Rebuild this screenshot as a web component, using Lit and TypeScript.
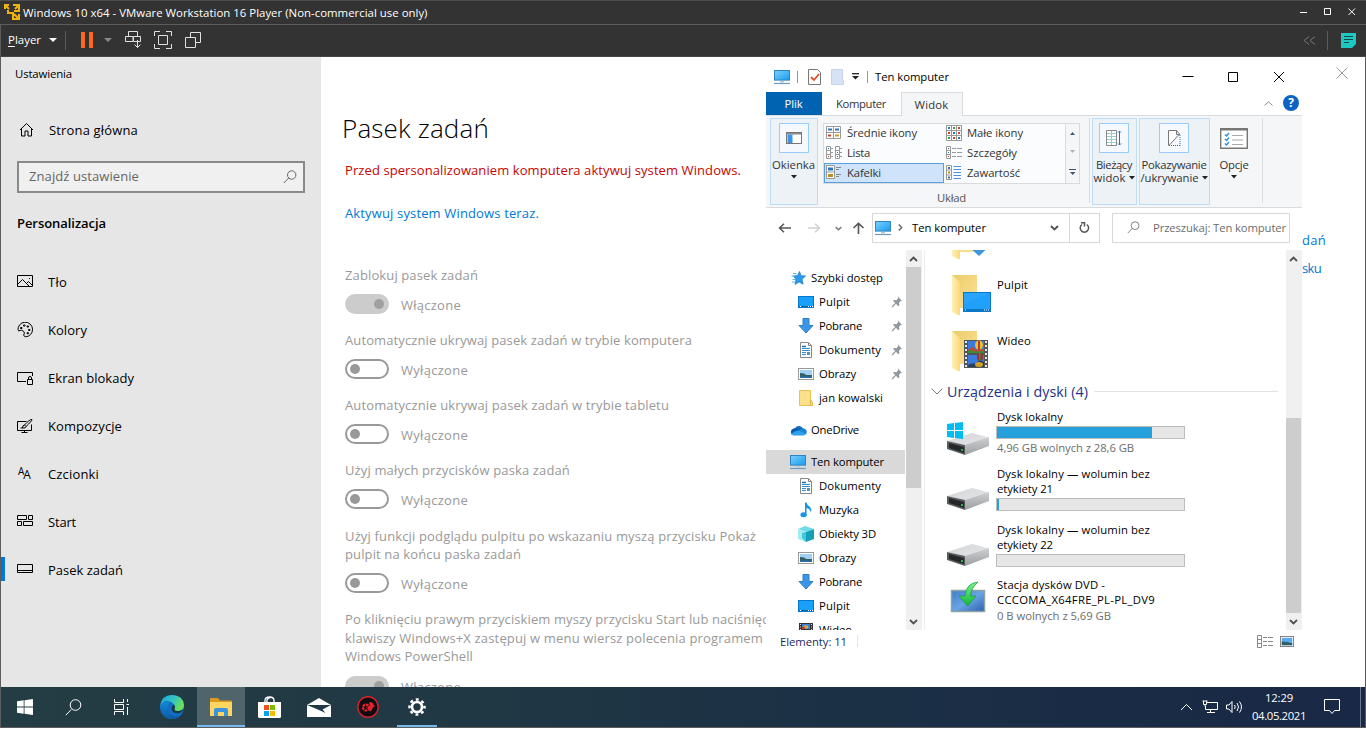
import { LitElement, html, css, nothing, type TemplateResult } from "lit";
import { customElement } from "lit/decorators.js";
import { classMap } from "lit/directives/class-map.js";

/* ---------- icons ---------- */

const monitor = html`<svg width="18" height="16" viewBox="0 0 18 16"><defs><linearGradient id="mg" x1="0" y1="0" x2="1" y2="1"><stop offset="0" stop-color="#7fd0fb"/><stop offset="1" stop-color="#169bf0"/></linearGradient></defs><rect x="1.5" y="1.5" width="15" height="9.6" fill="url(#mg)" stroke="#2f84bd"/><path d="M7 12h4v1.5H7z" fill="#b7cbd8"/><path d="M1 14.5h16" stroke="#6f9dc0" stroke-width="1.2"/></svg>`;
const desktop = html`<svg width="16" height="12" viewBox="0 0 16 12"><rect x=".5" y=".5" width="15" height="11" fill="#18a0fb" stroke="#0a78c8"/><path d="M1 10.500h14" stroke="#0765aa"/><path d="M2 10.500h1M10 10.500h1m1 0h1m1 0h1" stroke="#fff"/></svg>`;
const download = html`<svg width="16" height="16" viewBox="0 0 16 16"><path d="M5 .5h6v7h4L8 15 1 7.500h4z" fill="#3b97e3" stroke="#2a7fcb"/></svg>`;
const docFile = html`<svg width="14" height="16" viewBox="0 0 14 16"><path d="M1.500.5h8l3 3v12h-11z" fill="#fff" stroke="#888"/><path d="M9.500.5v3h3" fill="none" stroke="#888"/><path d="M3 6.500h8M3 8.500h8M3 10.500h4M3 12.500h4" stroke="#2f8fd8"/><path d="M3 4.500h4" stroke="#1670b8" stroke-width="1.500"/><rect x="8" y="10" width="3" height="3" fill="#5b93b0"/></svg>`;
const picture = html`<svg width="16" height="12" viewBox="0 0 16 12"><rect x=".5" y=".5" width="15" height="11" fill="#fff" stroke="#999"/><rect x="2" y="2" width="12" height="8" fill="#9fd0f3"/><path d="M2 5q5 0 6 2 3 0 6 0v3H2z" fill="#315f65"/><path d="M2 8.500h12V10H2z" fill="#2a6fa4"/></svg>`;
const folder = html`<svg width="14" height="16" viewBox="0 0 14 16"><path d="M.5.500h11v11l2 1v3H.5z" fill="#ffe08a" stroke="#e8c257"/><path d="M11.500 10q2 0 1.800 5.500h-2z" fill="#fff0b8" stroke="#e0b545"/></svg>`;
const star = html`<svg width="16" height="14" viewBox="0 0 16 14"><path d="M9.500 .5l1.600 4.200 4.500.2-3.500 3.400 1 4.900-4-2.300L5 13.500l1-5-2.500-3.400 4-.5z" fill="#2b9be8" stroke="#1878c2" stroke-width=".7"/><path d="M3 2.500h3.500M1.500 5h4M2.500 8.500h3.500M2 11h3" stroke="#5eb4ee"/></svg>`;
const cloud = html`<svg width="17" height="12" viewBox="0 0 17 12"><path d="M5 4.200A4.600 4.600 0 0 1 13 4.500L9 8z" fill="#0f6cbd"/><path d="M3.500 4.500Q6 3.500 8 5l7 5.500q-.8.8-2 .8H3.500a3.500 3.500 0 0 1 0-6.800z" fill="#0a5cb0"/><path d="M9 6.500q1.500-2.300 4.300-2.200a3.600 3.600 0 0 1 2.400 6.100z" fill="#1784d8"/><path d="M1.200 10.200Q3 7.500 9 6.500l6.700 3.900q-.9.900-2.200.9H3.500q-1.500 0-2.300-1.100z" fill="#2aa3ee"/></svg>`;
const note = html`<svg width="12" height="16" viewBox="0 0 12 16"><ellipse cx="3.600" cy="12.800" rx="3.200" ry="2.500" fill="#1793e8"/><path d="M5 13V.5h1.500Q7 3 9.500 4.500q3 3 1 6.500.3-4-4-5v7z" fill="#1793e8"/></svg>`;
const cube = html`<svg width="16" height="16" viewBox="0 0 16 16"><path d="M0 3l7-3 9 3-8 3z" fill="#6fdbe8"/><path d="M0 3l8 3v10l-8-3z" fill="#a4ecf4"/><path d="M8 6l8-3v10l-8 3z" fill="#159fb8"/><path d="M8 6v10l-4-4V7z" fill="#42c6da"/></svg>`;
const film = html`<svg width="16" height="16" viewBox="0 0 16 16"><rect x="1" y="1" width="14" height="14" fill="#333"/><rect x="4" y="2" width="8" height="5" fill="#3f83d8"/><path d="M6 3.500h4v3H6z" fill="#e0a63a"/><path d="M4 5h3v2H4z" fill="#c4422b"/><rect x="4" y="8" width="8" height="6" fill="#3268c0"/><path d="M2.500 2v12M13.500 2v12" stroke="#ddd" stroke-dasharray="1 1.500"/></svg>`;
const pin = html`<svg width="12" height="12" viewBox="0 0 12 12"><path d="M6.700.5l4.300 4.300-1.300.2-1.700 1.800.3 2.600-.9.800L2 4.800l1-.8 2.500.2L7 2.300z" fill="#8d979f"/><path d="M4.800 7.200L1 11" stroke="#8d979f" stroke-width="1.200"/></svg>`;

const bigFolder = (over: TemplateResult) => html`<svg width="46" height="42" viewBox="0 0 46 42"><defs><linearGradient id="fb" x1="0" y1="0" x2="1" y2="1"><stop offset="0" stop-color="#eccb68"/><stop offset="1" stop-color="#fbe39a"/></linearGradient><linearGradient id="ff" x1="0" y1="0" x2="1" y2="0"><stop offset="0" stop-color="#fff0b8"/><stop offset="1" stop-color="#fbd978"/></linearGradient></defs><path d="M5 1h25v33H13z" fill="url(#fb)"/><path d="M5 1l8 7v32q0 2-2 1l-6-3z" fill="url(#ff)"/>${over}</svg>`;
const bigDesktop = bigFolder(html`<svg x="16" y="18" width="28" height="20"><rect x=".5" y=".5" width="27" height="19" fill="#2ba5fb" stroke="#0a78c8"/><path d="M1 18h26" stroke="#0b76c4" stroke-width="2"/><path d="M1 12L27 1v16H1z" fill="#159bfa" opacity=".5"/><path d="M2 18h1M21 18h1m1 0h1m1 0h1" stroke="#fff"/></svg>`);
const bigVideo = bigFolder(html`<svg x="17" y="9" width="25" height="30"><path d="M0 1h24v28H0z" fill="#555"/><path d="M2 2v28M22 2v28" stroke="#e8e8e8" stroke-width="2" stroke-dasharray="2 2"/><path d="M4 2h16v12H4zM4 16h16v12H4z" fill="#3a7be0"/><path d="M4 11l4-3 4 3 4-2 4 2v3H4z" fill="#c5482e"/><path d="M4 12l3-1 4 1.500 9-.5v2H4z" fill="#3d8b3d"/><ellipse cx="15" cy="6" rx="4" ry="4.500" fill="#e8c22d"/><path d="M14 2h2v9h-2z" fill="#c43b20"/><ellipse cx="16" cy="18" rx="3" ry="4" fill="#9b3029"/><path d="M15 14h1.500v8H15z" fill="#3b8f46"/><path d="M4 26q4-3 8-1l1-2q3-3 7 0v5H4z" fill="#2c3f66"/><ellipse cx="15" cy="25.500" rx="4" ry="2.500" fill="#d4a326"/></svg>`);
const bigDownload = bigFolder(html`<svg x="16" y="18" width="28" height="22"><path d="M9 0h14v9h5L16 20 4 9h5z" fill="#3b97e3"/></svg>`);

const drive = (win: boolean) => html`<svg width="44" height="34" viewBox="0 0 44 34"><defs><linearGradient id="dt" x1="0" y1="0" x2="1" y2="1"><stop offset="0" stop-color="#d2d4d7"/><stop offset="1" stop-color="#e6e7e9"/></linearGradient><linearGradient id="ds" x1="0" y1="0" x2="0" y2="1"><stop offset="0" stop-color="#cfd0d2"/><stop offset="1" stop-color="#9c9ea1"/></linearGradient></defs><path d="M1 19l25-8 17 4.500-23 8z" fill="url(#dt)"/><path d="M19 23l24-8v9l-24 9z" fill="url(#ds)"/><path d="M1 19l18 4v10L1 27z" fill="#5a5d60"/><path d="M3 21l15 4v6L3 26z" fill="#25282a"/><path d="M15 27l2 .5v1.500l-2-.5z" fill="#2ee24a"/>${win ? html`<svg width="17" height="17"><path d="M1 2l7-1v7H1zM9 1l8-1v8H9zM1 9h7v7l-7-1zM9 9h8v8l-8-1z" fill="#00bcf2"/></svg>` : nothing}</svg>`;
const dvd = html`<svg width="36" height="32" viewBox="0 0 36 32"><defs><linearGradient id="vg" x1="0" y1="0" x2="1" y2="1"><stop offset="0" stop-color="#3d7cc9"/><stop offset=".5" stop-color="#69a4e4"/><stop offset="1" stop-color="#2b5fae"/></linearGradient><linearGradient id="ga" x1="0" y1="0" x2="0" y2="1"><stop offset="0" stop-color="#7af28b"/><stop offset="1" stop-color="#12b53a"/></linearGradient></defs><rect x="1.500" y="9.500" width="33" height="21" fill="url(#vg)" stroke="#8da3a5" stroke-width="1.500"/><path d="M28 1q-12 1-13 14H9l8.500 10L26 15h-5.500Q21 7 28 1z" fill="url(#ga)" stroke="#18983a" stroke-width=".7"/></svg>`;

const line = (w: number, h: number, d: string) =>
  html`<svg class="ln" width=${w} height=${h} viewBox="0 0 ${w} ${h}"><path d=${d}/></svg>`;

const NAV = [
  { label: "Tło", w: 19, icon: line(16, 16, "M.5 1.500h15v11H.5zM1 10l4.500-4.500 7 7M9.500 9.500l2-2 4 4M12 4.500h1") },
  { label: "Kolory", w: 39, icon: line(16, 16, "M1 8.200A7.300 7.300 0 1 1 8.500 14.800Q7 14.800 6.700 13 8.300 11 6.500 9.200 4 7.500 3 8.500 1.500 9.500 1 8.200zM3.500 5.500h1.500v1H3.500zM6.500 3H8v1H6.500zM10 4h1.500v1H10zM11.500 7.500H13v1h-1.500zM10 10.700h1.500v1H10z") },
  { label: "Ekran blokady", w: 86, icon: line(16, 16, "M9 11.500H.5v-9h15v3.500M10.500 9.500h5v5h-5zM11.500 9.500V8q0-1.500 1.500-1.500T14.500 8v1.500") },
  { label: "Kompozycje", w: 74, icon: line(16, 16, "M9.500 3.500h-9v9h14v-6M7.500 12.500v2M4.500 14.500h6M15 1.500Q13 1 7.500 7l1.500 1.500Q15 3 15 1.500zM7.500 7q-2 0-2 3H3.500M9 8.500q0 2-3.500 1.500") },
  { label: "Czcionki", w: 51, icon: html`<span class="aa"><span class="a1">A</span><span class="a2">A</span></span>` },
  { label: "Start", w: 28, icon: line(16, 16, "M.5 1.500h9v4h-9zM11.500 1.500h4v4h-4zM.5 7.500h4v4h-4zM6.500 7.500h9v4h-9z") },
  { label: "Pasek zadań", w: 75, icon: line(16, 16, "M.5 2.500h15v8H.5zM.5 8.500h15"), on: true },
];

const OPTIONS: { lines: [string, number][]; on?: boolean }[] = [
  { lines: [["Zablokuj pasek zadań", 133]], on: true },
  { lines: [["Automatycznie ukrywaj pasek zadań w trybie komputera", 347]] },
  { lines: [["Automatycznie ukrywaj pasek zadań w trybie tabletu", 324]] },
  { lines: [["Użyj małych przycisków paska zadań", 225]] },
  { lines: [["Użyj funkcji podglądu pulpitu po wskazaniu myszą przycisku Pokaż", 411], ["pulpit na końcu paska zadań", 176]] },
  { lines: [["Po kliknięciu prawym przyciskiem myszy przycisku Start lub naciśnięciu", 435], ["klawiszy Windows+X zastępuj w menu wiersz polecenia programem", 418], ["Windows PowerShell", 128]], on: true },
];

const TREE: { label: string; w: number; icon: TemplateResult; root?: boolean; pin?: boolean; gap?: boolean; on?: boolean }[] = [
  { label: "Szybki dostęp", w: 72, icon: star, root: true },
  { label: "Pulpit", w: 31, icon: desktop, pin: true },
  { label: "Pobrane", w: 43, icon: download, pin: true },
  { label: "Dokumenty", w: 62, icon: docFile, pin: true },
  { label: "Obrazy", w: 37, icon: picture, pin: true },
  { label: "jan kowalski", w: 64, icon: folder },
  { label: "OneDrive", w: 48, icon: cloud, root: true, gap: true },
  { label: "Ten komputer", w: 73, icon: monitor, root: true, gap: true, on: true },
  { label: "Dokumenty", w: 62, icon: docFile },
  { label: "Muzyka", w: 40, icon: note },
  { label: "Obiekty 3D", w: 57, icon: cube },
  { label: "Obrazy", w: 37, icon: picture },
  { label: "Pobrane", w: 43, icon: download },
  { label: "Pulpit", w: 31, icon: desktop },
  { label: "Wideo", w: 33, icon: film },
];

const VIEWS: { label: string; w: number; icon: TemplateResult; on?: boolean }[] = [
  { label: "Średnie ikony", w: 70, icon: html`<svg width="16" height="14" viewBox="0 0 16 14"><path d="M.5.5h14v12H.5zM7.500.5v12M.5 6.500h14" fill="#fff" stroke="#999"/><path d="M2 3.500h4M9 3.500h4" stroke="#2e77b8" stroke-width="2"/><path d="M2 9.500h3" stroke="#c4422b" stroke-width="2"/><path d="M9 9.500h4" stroke="#c99c1e" stroke-width="2"/></svg>` },
  { label: "Małe ikony", w: 56, icon: html`<svg width="16" height="16" viewBox="0 0 16 16"><path d="M.5.5h15v15H.5zM5.500.5v15M10.500.5v15M.5 5.500h15M.5 10.500h15" fill="#fff" stroke="#999"/><path d="M2 3h2M7 8h2M12 13h2" stroke="#2e77b8" stroke-width="2"/><path d="M7 3h2M2 13h2" stroke="#3c9a45" stroke-width="2"/><path d="M12 3h2M2 8h2M7 13h2M12 8h2" stroke="#c4422b" stroke-width="2"/></svg>` },
  { label: "Lista", w: 23, icon: html`<svg width="16" height="14" viewBox="0 0 16 14"><path d="M.5.5h4v12h-4zM.5 4.500h4M.5 8.500h4M9.500.5h4v12h-4zM9.500 4.500h4M9.500 8.500h4M5 2.500h2M5 6.500h2M5 10.500h2M14 2.500h2M14 6.500h2M14 10.500h2" fill="none" stroke="#999"/><path d="M2 2.500h1M11 6.500h1" stroke="#2e77b8"/><path d="M2 10.500h1M11 10.500h1" stroke="#c4422b"/></svg>` },
  { label: "Szczegóły", w: 50, icon: html`<svg width="16" height="14" viewBox="0 0 16 14"><path d="M.5.5h4v12h-4zM.5 4.500h4M.5 8.500h4M6 2.500h4M6 6.500h4M6 10.500h4M11 2.500h5M11 6.500h5M11 10.500h5" fill="none" stroke="#999"/><path d="M2 2.500h1M2 6.500h1" stroke="#2e77b8"/><path d="M2 10.500h1" stroke="#c4422b"/></svg>` },
  { label: "Kafelki", w: 34, on: true, icon: html`<svg width="16" height="15" viewBox="0 0 16 15"><path d="M.5.5h8v13h-8zM.5 7h8" fill="#fff" stroke="#999"/><path d="M2 4h5" stroke="#2e77b8" stroke-width="3"/><path d="M2 10.500h5" stroke="#b78f2d" stroke-width="3"/><path d="M10 2.500h5M10 4.500h3M10 9.500h5M10 11.500h3" stroke="#888"/></svg>` },
  { label: "Zawartość", w: 53, icon: html`<svg width="16" height="15" viewBox="0 0 16 15"><path d="M.5.5h5v14h-5zM.5 5h5M.5 10h5" fill="#fff" stroke="#999"/><path d="M2 3h2M2 12.500h2" stroke="#2e77b8" stroke-width="2"/><path d="M2 7.500h2" stroke="#b78f2d" stroke-width="2"/><path d="M7.500 1.500h7.500M7.500 4.500h7.500M7.500 7.500h7.500M7.500 10.500h7.500M7.500 13.500h7.500" stroke="#4a90e0"/></svg>` },
];

const t = (text: string, w: number, cls = "") => html`<span class="t ${cls}" data-w=${w}>${text}</span>`;
const caret = html`<svg class="caret" width="6" height="4" viewBox="0 0 6 4"><path d="M0 0h6L3 3.500z"/></svg>`;
const chevron = (up: boolean) => html`<svg width="9" height="6" viewBox="0 0 9 6"><path d=${up ? "M1 5l3.500-3.500L8 5" : "M1 1l3.500 3.500L8 1"} fill="none" stroke="#505050" stroke-width="1.800"/></svg>`;

/* Spacing between the individual glyphs of the bars. */
const gaps = css`
  .wfill { margin-left: 8px; }
  .vs1 { margin-left: 8px; }
  .g1 { margin-left: 14px; }
  .g2 { margin-left: 10px; }
  .g3 { margin-left: 13px; }
  .g4 { margin-left: 11px; }
  .g5 { margin-left: 13px; }
  .g6 { margin-left: auto; }
  .g7 { margin: 0 13px 0 10px; }
  .e1 { margin-left: 6px; }
  .e2 { margin-left: 10px; }
  .e3 { margin-left: 10px; }
  .e4 { margin-left: 8px; }
  .e5 { margin: 0 7px 0 8px; }
  .e7 { margin-left: auto; margin-right: 17px; gap: 33px; }
  .e7 svg:nth-child(2) { margin-right: 1px; }
  .e8 { margin: 9px 0 0 auto; }
  .b1 { width: 48px; }
  .b2 { width: 45px; margin-left: 2px; }
  .b3 { width: 71px; margin-left: 2px; }
  .b4 { width: 49px; margin-right: 3px; }
  .a3 { margin-left: 17px; }
  .a4 { margin-left: 14px; }
  .a5 { margin: 0 7px 0 10px; }
  .path { width: 198px; padding-left: 1px; }
  .a6 { margin: 0 9px 0 6px; }
  .a7 { margin-left: auto; margin-right: 10px; }
  .ref { width: 31px; margin-left: -1px; justify-content: center; }
  .srch { width: 178px; margin-left: 12px; padding-left: 14px; gap: 13px; color: #6d6d6d; }
  .files .t { margin-left: 1px; }
  .head .t { margin-left: 0; }
  .f1 { padding-top: 4px; line-height: 21px; }
  .d1 .tile { padding-top: 7px; height: 64px; }
  .d1 .pics { margin: 13px 1px 0 -1px; }
  .d2 .pics { margin: 11px 1px 0 -1px; }
  .tx .bar { margin-top: 2px; }
  .d4 .pics { padding-left: 3px; padding-top: 4px; }
  .d4 .tile { margin-top: -1px; }
  .s1 { margin-left: 10px; background: #e6e6e6; height: 12px; }
  .s2 { margin-left: auto; margin-right: 7px; }
  .edge { width: 52px; padding-left: 2px; }
  .tray { margin-left: auto; }
  .k1 { margin-left: 9px; }
  .k2 { margin-left: 8px; }
  .clock { margin-left: 8px; }
  .k3 { margin-left: 17px; }
  .k4 { width: 1px; height: 40px; background: #6d7890; margin: 0 4px 0 20px; }
`;

@customElement("app-root")
export class AppRoot extends LitElement {
  static styles = [css`
    :host { display: block; width: 1366px; height: 729px; overflow: hidden; background: #fff; font-family: "Open Sans", "Noto Sans", sans-serif; font-size: 13px; color: #000; }
    * { box-sizing: border-box; }
    svg { display: block; flex: none; }
    .t { white-space: nowrap; display: block; flex: none; }
    .row { display: flex; align-items: center; }
    .ln { fill: none; stroke: #000; }
    .screen { height: 728px; display: flex; flex-direction: column; }

    .vmtitle { height: 25px; background: #333; border-top: 1px solid #4d4d4d; border-bottom: 1px solid #5c5c5c; padding: 0 10px 0 4px; color: #fff; font-size: 11.4px; flex: none; }
    .vmtitle .t { margin-left: 2px; }
    .wbtns { margin-left: auto; gap: 16px; padding-bottom: 1px; }
    .vmbar { height: 32px; background: #333; border-left: 1px solid #5c5c5c; border-bottom: 1px solid #444; padding: 0 10px 1px 7px; color: #fff; font-size: 11.4px; flex: none; }
    .vmbar u { text-underline-offset: 2px; }
    .vmbar > .t { padding-bottom: 1px; }
    .vsep { width: 1px; height: 19px; background: #5c5c5c; flex: none; }

    .guest { height: 671px; border-left: 1px solid #5c5c5c; border-right: 1px solid #5c5c5c; border-bottom: 1px solid #5c5c5c; display: flex; flex-direction: column; position: relative; }
    .settings { height: 630px; display: flex; overflow: hidden; }
    .side { width: 320px; background: #e6e6e6; flex: none; }
    .apptitle { height: 34px; padding: 0 0 2px 14px; font-size: 11.4px; }
    .home { height: 40px; margin-top: 19px; padding-left: 18px; gap: 15px; }
    .find { height: 32px; width: 288px; margin: 11px 0 0 16px; border: 2px solid #8a8a8a; background: #f0f0f0; color: #666; padding: 0 6px 2px 10px; justify-content: space-between; }
    .find svg { margin-top: 2px; }
    .group { margin: 20px 0 25px 16px; height: 20px; font-weight: 600; }
    .item { height: 48px; padding: 0 0 0 16px; gap: 15px; position: relative; }
    .item.on::before { content: ""; position: absolute; left: 0; top: 11px; width: 4px; height: 24px; background: #0078d7; }
    .aa { width: 16px; height: 16px; display: flex; }
    .a1 { font: 10px/11px "Open Sans", sans-serif; padding-left: 1px; }
    .a2 { font: 500 12px/18px "Open Sans", sans-serif; margin-left: -1px; }

    .main { flex: 1; padding-left: 24px; display: flex; flex-direction: column; }
    h1 { margin: 50px 0 0 -3px; height: 42px; line-height: 42px; font-size: 26px; font-weight: 300; }
    .warn { color: #c50500; height: 20px; line-height: 20px; margin-top: 11px; }
    .link { color: #0078d7; line-height: 20px; height: 20px; }
    .act { margin-top: 23px; margin-bottom: 43px; }
    .opt { color: #999; margin-bottom: 17px; }
    .lines { line-height: 18.500px; margin-bottom: 10px; }
    .n1 { height: 18px; } .n2 { height: 37px; line-height: 18px; padding-top: 1px; } .n3 { height: 56px; }
    .sw { height: 20px; gap: 12px; }
    .sw .t { padding-top: 2px; }
    .knob { width: 44px; height: 20px; border: 2px solid #999; border-radius: 10px; padding: 0 3px; display: flex; align-items: center; flex: none; }
    .knob::before { content: ""; width: 10px; height: 10px; border-radius: 5px; background: #999; }
    .knob.on { background: #ccc; border-color: #ccc; justify-content: flex-end; }
    .knob.on::before { background: #a0a0a0; }
    .rail { width: 63px; flex: none; display: flex; flex-direction: column; }
    .rail svg { margin: 10px 0 147px 34px; }
    .rail .t { height: 28px; line-height: 28px; }

    .explorer { position: absolute; left: 765px; top: 0; width: 536px; height: 598px; background: #fff; font-size: 11.300px; display: flex; flex-direction: column; }
    .etitle { height: 35px; padding: 4px 0 0 7px; flex: none; }
    .etitle .vsep { height: 12px; background: #999; }
    .tabs { height: 23px; display: flex; flex: none; position: relative; }
    .tab { height: 24px; display: flex; align-items: center; justify-content: center; color: #333; flex: none; padding: 0 1px 1px 0; }
    .file { width: 56px; background: #0063b1; color: #fff; height: 23px; }
    .comp { width: 79px; }
    .view { width: 62px; background: #f5f6f7; border: 1px solid #dadbdc; border-bottom: 0; }
    .help { width: 16px; height: 16px; border-radius: 8px; background: #0b63c4; color: #fff; font: 700 12px/16px "Open Sans", sans-serif; text-align: center; margin: 3px 3px 0 10px; }
    .ribbon { height: 93px; background: #f5f6f7; border-top: 1px solid #dadbdc; border-bottom: 1px solid #dadbdc; display: flex; flex: none; padding: 2px 0 0 4px; color: #333; }
    .tabs .view { z-index: 1; }
    .big { height: 87px; display: flex; flex-direction: column; align-items: center; border: 1px solid #bcdcf8; background: #edf2f7; padding: 4px 1px 0 0; flex: none; }
    .big .ic { width: 30px; height: 30px; border: 1px solid #99ccff; background: #f5f9fd; display: flex; align-items: center; justify-content: center; margin-bottom: 5px; }
    .big.plain { border-color: transparent; background: none; }
    .big.plain .ic { border: 0; background: none; }
    .big .row, .big > .t { height: 13px; line-height: 13px; gap: 3px; }
    .big > svg { margin-top: 4px; }
    .caret { fill: #222; }
    .gal { margin-left: 5px; width: 266px; }
    .galbox { margin-top: 5px; height: 61px; border: 1px solid #dadbdc; background: #fbfcfd; display: flex; width: 257px; }
    .cells { width: 241px; display: grid; grid-template-columns: 120px 1fr; grid-template-rows: repeat(3, 20px); margin-top: -1px; }
    .cell { display: flex; align-items: center; gap: 5px; padding: 0 0 1px 2px; }
    .cell svg { width: 16px; }
    .cell.on { background: #cfe3fa; border: 1px solid #5a9fe0; padding-left: 1px; }
    .galbar { width: 14px; border-left: 1px solid #dadbdc; background: #f5f6f7; display: flex; flex-direction: column; align-items: center; justify-content: space-around; }
    .cap { padding: 7px 9px 0 0; display: flex; justify-content: center; color: #555; line-height: 14px; }
    .rsep { width: 1px; height: 85px; background: #dcdddf; }
    .addr { height: 42px; padding: 5px 12px 7px 12px; flex: none; display: flex; align-items: center; }
    .box { height: 30px; border: 1px solid #d9d9d9; display: flex; align-items: center; flex: none; padding-bottom: 1px; }
    .body { height: 380px; display: flex; flex: none; }
    .tree { width: 140px; overflow: hidden; padding-top: 16px; }
    .node { height: 24px; width: 139px; padding: 0 0 2px 31px; }
    .node .ni { width: 18px; display: flex; justify-content: center; margin-right: 4px; padding-top: 1px; }
    .node.root { padding-left: 23px; }
    .node.gap { margin-top: 8px; }
    .node.on { background: #d9d9d9; }
    .node .pn { margin-left: auto; margin-right: 2px; padding-top: 1px; }
    .sb { width: 16px; height: 380px; background: #f0f0f0; display: flex; flex-direction: column; align-items: center; flex: none; justify-content: space-between; }
    .sb svg { margin: 6px 1px 5px 0; }
    .thumb { width: 15px; background: #cdcdcd; }
    .grow { flex: 1; display: flex; flex-direction: column; width: 16px; }
    .t1 { height: 221px; } .t2 { height: 195px; margin-top: auto; }
    .files { width: 362px; margin-left: 2px; border-left: 1px solid #eee; overflow: hidden; padding-left: 22px; flex: none; }
    .files .tile { height: 56px; display: flex; }
    .pics { width: 49px; flex: none; }
    .clip { height: 20px; overflow: hidden; display: flex; align-items: flex-end; }
    .clip svg { margin-bottom: 10px; }
    .head { height: 20px; margin-left: -16px; padding-bottom: 2px; color: #1e3287; font-size: 14.300px; gap: 4px; }
    .head i { height: 1px; width: 184px; background: #e2e2e2; margin: 1px 0 0 2px; }
    .bar { width: 189px; height: 13px; border: 1px solid #bcbcbc; background: #e6e6e6; }
    .fill { height: 11px; background: #26a0da; }
    .tx { line-height: 15px; }
    .sub { color: #6d6d6d; line-height: 16px; margin-top: 1px; }
    .status { height: 24px; padding: 0 8px 2px 14px; color: #1e2a66; flex: none; }

    .task { height: 40px; background: linear-gradient(90deg, #243c43 0%, #203844 35%, #1b2f45 65%, #192846 100%); display: flex; flex: none; color: #fff; }
    .app { width: 49px; height: 40px; display: flex; align-items: center; justify-content: center; border-bottom: 2px solid transparent; padding-top: 2px; flex: none; }
    .app.nar { width: 48px; }
    .app.hot { background: #50646c; border-color: #76b9ed; width: 48px; }
    .app.run { border-color: #76b9ed; width: 40px; margin-left: 5px; }
    .white .ln { stroke: #fff; fill: none; }
    .clock { font-size: 11.300px; line-height: 18px; display: flex; flex-direction: column; align-items: center; width: 56px; }
  `, gaps];

  firstUpdated() {
    this.renderRoot.querySelectorAll<HTMLElement>(".t[data-w]").forEach((el) => {
      const range = document.createRange();
      range.selectNodeContents(el);
      const natural = range.getBoundingClientRect().width;
      const n = (el.textContent ?? "").length;
      if (natural && n > 1) {
        el.style.letterSpacing = `${((Number(el.dataset.w) - natural) / n).toFixed(3)}px`;
      }
    });
  }

  private vm() {
    return html`
      <div class="vmtitle row">
        <svg width="17" height="17" viewBox="0 0 17 17" fill="none" stroke="#efb310" stroke-width="2"><path d="M5 1H1v4M1 1l4 4M9 1h6v6h-5M15 1l-4 4M4 6v3h5v6h6v-5M10 10l5 5"/></svg>
        ${t("Windows 10 x64 - VMware Workstation 16 Player (Non-commercial use only)", 404.500)}
        <div class="row wbtns white">
          ${line(8, 8, "M0 4.500h7")}${line(8, 8, "M.5.5h6v6h-6z")}${line(8, 8, "M.5.5l6.500 6.500M7 .5L.5 7")}
        </div>
      </div>
      <div class="vmbar row">
        <span class="t" data-w="33"><u>P</u>layer</span>
        <svg width="8" height="4" class="wfill" viewBox="0 0 8 4"><path d="M0 0h8L4 4z" fill="#fff"/></svg>
        <span class="vsep vs1"></span>
        <svg class="g1" width="14" height="16" viewBox="0 0 14 16"><path d="M1 0h4v16H1zM9 0h4v16H9z" fill="#ff671b"/></svg>
        <svg class="g2" width="8" height="4" viewBox="0 0 8 4"><path d="M0 0h8L4 4z" fill="#8a8a8a"/></svg>
        <svg class="g3" width="18" height="18" viewBox="0 0 18 18" fill="none" stroke="#e0e0e0"><path d="M3.500 5.500v-5h9v5M8 5.500H.5v5h7.500zM8.500 5.500h7v5h-7zM12.500 9v7.500M9.500 13.500l3 3 3-3"/></svg>
        <svg class="g4" width="18" height="18" viewBox="0 0 18 18" fill="none" stroke="#e0e0e0"><path d="M.5 5V.5H6M12 .5h5.500V5M17.500 13v4.500H12M6 17.500H.5V13M4.500 4.500h9v9h-9z"/></svg>
        <svg class="g5" width="17" height="17" viewBox="0 0 17 17" fill="none" stroke="#e0e0e0"><path d="M.5 5.500h10v10H.5zM5.500 5.500v-5h10v10h-5"/></svg>
        <svg class="g6" width="15" height="9" viewBox="0 0 15 9" fill="none" stroke="#777"><path d="M7 .5L2 4.500l5 4M13 .5L8 4.500l5 4"/></svg>
        <span class="vsep g7"></span>
        <svg class="g8" width="15" height="15" viewBox="0 0 15 15"><path d="M0 0h15v11l-4 4H0z" fill="#1fc7c2"/><path d="M3 3.500h9M3 6.500h9M3 9.500h5" stroke="#17494b"/></svg>
      </div>`;
  }

  private settings() {
    return html`<div class="settings">
      <div class="side">
        <div class="apptitle row">${t("Ustawienia", 57)}</div>
        <div class="home row">${line(15, 16, "M1 8L7.500 1.500 14 8M2.500 7v7h3.500v-5h3v5h3.500v-7")}${t("Strona główna", 89)}</div>
        <div class="find row">${t("Znajdź ustawienie", 110)}<svg width="14" height="14" viewBox="0 0 14 14" fill="none" stroke="#666"><circle cx="8.700" cy="5" r="4.200"/><path d="M5.700 8L.8 13"/></svg></div>
        <div class="group row">${t("Personalizacja", 89)}</div>
        ${NAV.map((n) => html`<div class=${classMap({ item: true, row: true, on: !!n.on })}>${n.icon}${t(n.label, n.w)}</div>`)}
      </div>
      <div class="main">
        <h1>${t("Pasek zadań", 147)}</h1>
        <div class="warn">${t("Przed spersonalizowaniem komputera aktywuj system Windows.", 396)}</div>
        <div class="link act">${t("Aktywuj system Windows teraz.", 194)}</div>
        ${OPTIONS.map((o) => html`<div class="opt">
          <div class="lines n${o.lines.length}">${o.lines.map(([s, w]) => t(s, w))}</div>
          <div class="row sw"><span class=${classMap({ knob: true, on: !!o.on })}></span>${o.on ? t("Włączone", 60) : t("Wyłączone", 67)}</div>
        </div>`)}
      </div>
      <div class="rail"><svg width="12" height="12" viewBox="0 0 12 12" stroke="#999"><path d="M.5.5l11 11M11.500.5l-11 11"/></svg>
        <span class="link t" data-w="24">dań</span><span class="link t" data-w="19">sku</span></div>
    </div>`;
  }

  private drive(lines: [string, number][], icon: TemplateResult, pct: number | null, sub?: [string, number]) {
    return html`<div class="tile"><div class="pics">${icon}</div><div class="tx">
      ${lines.map(([s, w]) => t(s, w))}
      ${pct === null ? nothing : html`<div class="bar"><div class="fill" style="width:${pct}%"></div></div>`}
      ${sub ? html`<div class="sub">${t(sub[0], sub[1])}</div>` : nothing}
    </div></div>`;
  }

  private explorer() {
    return html`<div class="explorer">
      <div class="etitle row">
        ${monitor}<span class="vsep e1"></span>
        <svg class="e2" width="13" height="16" viewBox="0 0 13 16"><path d="M.5.5h9l3 3v12H.5z" fill="#fff" stroke="#777"/><path d="M3 8l3 3 5-6" fill="none" stroke="#e0532a" stroke-width="1.800"/></svg>
        <svg class="e3" width="13" height="16" viewBox="0 0 13 16"><path d="M.5.5h11v10l1 1v4H.5z" fill="#d6e3f5" stroke="#c3d4ec"/></svg>
        <svg class="e4" width="7" height="7" viewBox="0 0 7 7"><path d="M0 .7h7" stroke="#222" stroke-width="1.300"/><path d="M0 3h7L3.500 6.500z" fill="#222"/></svg>
        <span class="vsep e5"></span>${t("Ten komputer", 74, "e6")}
        <div class="row e7">${line(12, 12, "M.5 5.500h11")}${line(12, 12, "M1.500 1.500h9v9h-9z")}${line(12, 12, "M1 1l10 10M11 1L1 11")}</div>
      </div>
      <div class="tabs"><div class="tab file">${t("Plik", 18)}</div><div class="tab comp">${t("Komputer", 50)}</div><div class="tab view">${t("Widok", 34)}</div>
        <svg class="e8" width="9" height="5" viewBox="0 0 9 5"><path d="M.5 4.500l4-3.700 4 3.700" fill="none" stroke="#888"/></svg><div class="help">?</div></div>
      <div class="ribbon">
        <div class="big b1"><div class="ic"><svg width="16" height="12" viewBox="0 0 16 12"><rect x=".5" y=".5" width="15" height="11" fill="#fff" stroke="#777"/><path d="M1 1h14v1.500H1z" fill="#888"/><path d="M1.500 2.500h5v8.500h-5z" fill="#3b97e3"/></svg></div>${t("Okienka", 43)}${caret}</div>
        <div class="gal"><div class="galbox"><div class="cells">
          ${VIEWS.map((v) => html`<div class=${classMap({ cell: true, on: !!v.on })}>${v.icon}${t(v.label, v.w)}</div>`)}</div>
          <div class="galbar"><svg width="5" height="3"><path d="M0 3h5L2.500 0z" fill="#3c5674"/></svg><svg width="5" height="3"><path d="M0 0h5L2.500 3z" fill="#a9b3bf"/></svg><svg width="7" height="6"><path d="M0 .5h7" stroke="#3c5674"/><path d="M1 3h5.500L3.700 6z" fill="#3c5674"/></svg></div></div>
          <div class="cap">${t("Układ", 29)}</div></div>
        <span class="rsep"></span>
        <div class="big b2"><div class="ic"><svg width="16" height="17" viewBox="0 0 16 17"><path d="M.5.5h10v15H.5z" fill="#fff" stroke="#888"/><path d="M1 3.500h9M1 6.500h9M1 9.500h9M1 12.500h9M5.500 1v14" stroke="#9cc"/><path d="M13.500 1v14M12 2.500l1.500-1.500L15 2.500M12 13.500l1.500 1.500 1.500-1.500" fill="none" stroke="#1d78c4"/></svg></div>${t("Bieżący", 36)}<div class="row">${t("widok", 32)}${caret}</div></div>
        <div class="big b3"><div class="ic"><svg width="13" height="17" viewBox="0 0 13 17"><path d="M.5.5h8l3.500 3.500v1L1 15.500H.5z" fill="#fff"/><path d="M12 5v11M1 15.500h11" stroke="#1d78c4" stroke-dasharray="1 1"/><path d="M.5 15.500V.5h8l3 3.500L1 15.500M8.500.5v4h3.500" fill="none" stroke="#777"/></svg></div>${t("Pokazywanie", 65)}<div class="row">${t("/ukrywanie", 58)}${caret}</div></div>
        <div class="big plain b4"><div class="ic"><svg width="28" height="21" viewBox="0 0 28 21"><path d="M.7.7h26.600v19.600H.7z" fill="#fff" stroke="#777" stroke-width="1.400"/><path d="M1 1.500h26" stroke="#777" stroke-width="2"/><path d="M12 7.500h11M12 12h11M12 16.500h11" stroke="#aaa"/><path d="M5 6.500l1.500 1.500L9 5M5 11l1.500 1.500L9 9.500M5 15.500l1.500 1.500L9 14" fill="none" stroke="#2f8fdf" stroke-width="1.500"/></svg></div>${t("Opcje", 29)}${caret}</div>
        <span class="rsep"></span>
      </div>
      <div class="addr">
        <svg width="13" height="10" viewBox="0 0 13 10"><path d="M13 5H1.500M6 .7L1.500 5 6 9.300" fill="none" stroke="#555" stroke-width="1.500"/></svg>
        <svg class="a3" width="13" height="10" viewBox="0 0 13 10"><path d="M0 5h11.500M7 .7L11.500 5 7 9.300" fill="none" stroke="#d0d0d0" stroke-width="1.500"/></svg>
        <svg class="a4" width="7" height="5" viewBox="0 0 7 5"><path d="M.7 1l2.800 2.800L6.300 1" fill="none" stroke="#777" stroke-width="1.500"/></svg>
        <svg class="a5" width="13" height="12" viewBox="0 0 13 12"><path d="M6.500 12V1.500M1.500 6l5-4.700 5 4.700" fill="none" stroke="#555" stroke-width="1.600"/></svg>
        <div class="box path">${monitor}<svg class="a6" width="5" height="7" viewBox="0 0 5 7"><path d="M.7.5l3 3-3 3" fill="none" stroke="#666" stroke-width="1.400"/></svg>${t("Ten komputer", 74)}<span class="a7">${chevron(false)}</span></div>
        <div class="box ref"><svg width="11" height="12" viewBox="0 0 11 12"><path d="M3 2.500A4.200 4.200 0 1 0 7.800 2.500M2 .8h3.500v3.700" fill="none" stroke="#555" stroke-width="1.500"/></svg></div>
        <div class="box srch"><svg width="13" height="13" viewBox="0 0 14 14" fill="none" stroke="#777"><circle cx="8.700" cy="5" r="4.200"/><path d="M5.700 8L.8 13"/></svg>${t("Przeszukaj: Ten komputer", 133)}</div>
      </div>
      <div class="body">
        <div class="tree">${TREE.map((n) => html`<div class=${classMap({ node: true, row: true, root: !!n.root, gap: !!n.gap, on: !!n.on })}><span class="ni">${n.icon}</span>${t(n.label, n.w)}${n.pin ? html`<span class="pn">${pin}</span>` : nothing}</div>`)}</div>
        <div class="sb">${chevron(true)}<div class="grow"><div class="thumb t1"></div></div>${chevron(false)}</div>
        <div class="files">
          <div class="clip">${bigDownload}</div>
          <div class="tile f1"><div class="pics">${bigDesktop}</div>${t("Pulpit", 31)}</div>
          <div class="tile f1"><div class="pics">${bigVideo}</div>${t("Wideo", 34)}</div>
          <div class="head row"><svg width="12" height="7" viewBox="0 0 12 7"><path d="M.7.7L6 6 11.300.7" fill="none" stroke="#777"/></svg>${t("Urządzenia i dyski (4)", 141)}<i></i></div>
          <div class="d1">${this.drive([["Dysk lokalny", 66]], drive(true), 83, ["4,96 GB wolnych z 28,6 GB", 137])}</div>
          <div class="d2">${this.drive([["Dysk lokalny — wolumin bez", 153], ["etykiety 21", 56]], drive(false), 1)}</div>
          <div class="d2">${this.drive([["Dysk lokalny — wolumin bez", 153], ["etykiety 22", 56]], drive(false), 0)}</div>
          <div class="d4">${this.drive([["Stacja dysków DVD -", 108], ["CCCOMA_X64FRE_PL-PL_DV9", 158]], dvd, null, ["0 B wolnych z 5,69 GB", 114])}</div>
        </div>
        <div class="sb last">${chevron(true)}<div class="grow"><div class="thumb t2"></div></div>${chevron(false)}</div>
      </div>
      <div class="status row">${t("Elementy: 11", 67)}<span class="vsep s1"></span>
        <svg class="s2" width="16" height="13" viewBox="0 0 16 13"><path d="M.5.5h4v12h-4zM.5 4.500h4M.5 8.500h4M6 2.500h4M6 6.500h4M6 10.500h4M11 2.500h5M11 6.500h5M11 10.500h5" fill="none" stroke="#888"/></svg>
        <span class="s3"><svg width="14" height="11" viewBox="0 0 16 12" preserveAspectRatio="none"><rect x=".5" y=".5" width="15" height="11" fill="#fff" stroke="#777"/><rect x="2" y="2" width="12" height="8" fill="#58aaf0"/><path d="M2 6q6 0 12 2v2H2z" fill="#315f65"/></svg></span></div>
    </div>`;
  }

  private taskbar() {
    return html`<div class="task white">
      <div class="app nar"><svg width="16" height="16" viewBox="0 0 16 16"><path d="M0 2.200l6.700-.9v6.300H0zM7.500 1.200L16 0v7.600H7.500zM0 8.400h6.700v6.300L0 13.800zM7.500 8.400H16V16l-8.500-1.200z" fill="#fff"/></svg></div>
      <div class="app nar">${line(17, 17, "M6.300 10.500L.8 16.200M5.200 6a5.300 5.300 0 1 0 10.600 0a5.300 5.300 0 1 0-10.600 0")}</div>
      <div class="app nar">${line(17, 16, "M1.500 0v3.500h9V0M1.500 16v-3.500h9V16M1.500 5.500h9v5h-9zM14.500 0v3M14.500 8v8M13.500 5.500h2.500")}</div>
      <div class="app edge"><svg width="24" height="24" viewBox="0 0 24 24"><defs><linearGradient id="eg" x1="0" y1="0" x2="1" y2=".4"><stop offset="0" stop-color="#1b9de2"/><stop offset=".6" stop-color="#36c5c0"/><stop offset="1" stop-color="#6be05a"/></linearGradient><linearGradient id="eb" x1="0" y1="0" x2="0" y2="1"><stop offset="0" stop-color="#1488d8"/><stop offset="1" stop-color="#0c59a4"/></linearGradient></defs><circle cx="12" cy="12" r="12" fill="#0f6fc4"/><path d="M0 11Q1.500 0 12 0q11 0 12 10 0 6-6.500 6-4 0-3-3 1-4-3.500-6Q4 4 0 11z" fill="url(#eg)"/><path d="M0 11Q4 5.500 10 7 6 10 8 15.500q2.500 5.500 9 5.500 2 0 4-1.500Q18 24 12 24 1 24 0 11z" fill="url(#eb)"/><path d="M14 9.500q1.500 2 .5 4-.5 2.500 3 2.500 3.500.3 5.800-2Q22 18 18 18.300q-6 .3-6.500-4.800Q11.500 11 14 9.500z" fill="#203844"/></svg></div>
      <div class="app hot"><svg width="22" height="19" viewBox="0 0 22 19"><path d="M0 1q0-1 1-1h7l2 2.500h11q1 0 1 1V9H0z" fill="#dd9a1c"/><path d="M0 4h22v13.500q0 .5-.5.5H.5q-.5 0-.5-.5z" fill="#ffd560"/><path d="M4 18v-6q0-2 2-2h10q2 0 2 2v6h-4v-4H8v4z" fill="#3b93e0"/></svg></div>
      <div class="app"><svg width="23" height="22" viewBox="0 0 23 22"><path d="M7 7V4.500Q7 1 11.500 1T16 4.500V7M9 6V4q1-2.500 3.500-2.500" fill="none" stroke="#fff" stroke-width="1.300"/><path d="M0 6h23v14.500q0 1.500-1.500 1.500h-20Q0 22 0 20.500z" fill="#fff"/><path d="M6 9h5v5H6z" fill="#f25022"/><path d="M12 9h5v5h-5z" fill="#7fba00"/><path d="M6 15h5v5H6z" fill="#00a4ef"/><path d="M12 15h5v5h-5z" fill="#ffb900"/></svg></div>
      <div class="app"><svg width="24" height="19" viewBox="0 0 24 19"><path d="M0 7l12-7 12 7v12H0z" fill="#fff"/><path d="M0 7h24l-8.500 4.500 3 3.500L12 12z" fill="#1f3843"/></svg></div>
      <div class="app"><svg width="22" height="22" viewBox="0 0 22 22"><circle cx="11" cy="11" r="10.200" fill="#0d0d10" stroke="#d8222b" stroke-width="1.400"/><circle cx="9" cy="11.500" r="3" fill="none" stroke="#ea242e" stroke-width="2.200" stroke-dasharray="2.600 .8"/><path d="M9 12l3-2.500M12.500 6.500q3.500-.5 4 3l1 .5-2 1.500-1.500 3-1.500.5 1-4z" fill="#ea242e" stroke="#ea242e" stroke-width=".8"/></svg></div>
      <div class="app run"><svg width="18" height="18" viewBox="0 0 18 18"><circle cx="9" cy="9" r="5" fill="none" stroke="#fff" stroke-width="2.600"/><circle cx="9" cy="9" r="7.500" fill="none" stroke="#fff" stroke-width="2.500" stroke-dasharray="2.900 2.990" stroke-dashoffset="1.450"/></svg></div>
      <div class="row tray">
        ${line(13, 8, "M1 7l5.500-5.500L12 7")}
        <span class="k1">${line(16, 14, "M5 2.500h10.500v7H3.500V6M8.500 9.500v3M5 12.500h8M1.500 1v3.500h3V1M3 4.500v2M.5 1h5")}</span>
        <span class="k2">${line(17, 14, "M.5 5H3l3-3.500v11L3 9H.5zM8.500 5q1.500 2 0 4M11 3q3 4 0 8M13.500 1.500q4 5.500 0 11")}</span>
        <div class="clock">${t("12:29", 28)}${t("04.05.2021", 54)}</div>
        <span class="k3">${line(16, 16, "M.5.5h15v11h-5l-2.500 3-2.500-3h-5z")}</span>
        <span class="k4"></span>
      </div>
    </div>`;
  }

  render() {
    return html`<div class="screen">${this.vm()}<div class="guest">${this.settings()}${this.taskbar()}${this.explorer()}</div></div>`;
  }
}
